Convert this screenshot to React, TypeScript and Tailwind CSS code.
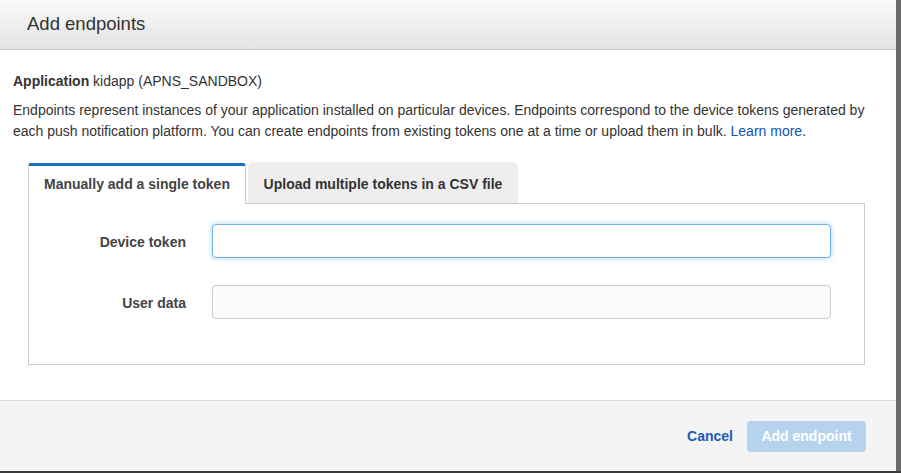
import React from "react";

export default function App() {
  return (
    <div className="w-[901px] h-[473px] bg-[#3a3a3a] overflow-hidden" style={{ fontFamily: '"Liberation Sans", Arial, Helvetica, sans-serif' }}>
      <div className="flex h-[471px]">
        <div className="w-[896px] h-[471px] bg-white flex flex-col">
          {/* Header */}
          <div className="h-[50px] shrink-0 bg-gradient-to-b from-[#fafafa] to-[#e3e3e3] border-b border-[#cccccc] flex items-center pl-[27px]">
            <h1 className="text-[18.5px] text-[#333333] leading-none pb-[1px]">Add endpoints</h1>
          </div>
          {/* Body */}
          <div className="flex-1 px-[13px] pt-[21px]">
            <p className="text-[14px] leading-[20px] text-[#333333]">
              <span className="font-bold">Application</span> kidapp (APNS_SANDBOX)
            </p>
            <p className="mt-[9px] text-[14px] leading-[21px] text-[#333333] pr-[4px]">
              Endpoints represent instances of your application installed on particular devices. Endpoints correspond to the device tokens generated by each push notification platform. You can create endpoints from existing tokens one at a time or upload them in bulk.{" "}
              <span className="text-[#0f52ba]">Learn more</span>.
            </p>
            <div className="ml-[15px] mr-[18px] mt-[20px]">
              <div className="flex items-end h-[41px]">
                <div className="w-[218px] h-[41px] bg-white border-t-[3px] border-t-[#1a6bc6] border-x border-x-[#cccccc] rounded-t-[3px] flex items-center justify-center text-[14px] font-bold text-[#444444] relative -mb-px z-10 pb-[1px]">
                  Manually add a single token
                </div>
                <div className="ml-[2px] w-[270px] h-[41px] bg-[#eeeeee] rounded-t-[5px] flex items-center justify-center text-[14px] font-bold text-[#333333] pt-[3px]">
                  Upload multiple tokens in a CSV file
                </div>
              </div>
              <div className="h-[162px] border border-[#cccccc] pt-[20px] flex flex-col gap-[27px]">
                <div className="flex items-center">
                  <label className="w-[157px] text-right text-[14px] font-bold text-[#444444] pt-[3px]">Device token</label>
                  <div className="ml-[26px] w-[619px] h-[34px] rounded-[4px] border border-[#6fb4f0] bg-white shadow-[0_0_5px_rgba(102,175,233,0.6)]" />
                </div>
                <div className="flex items-center">
                  <label className="w-[157px] text-right text-[14px] font-bold text-[#444444] pt-[2px]">User data</label>
                  <div className="ml-[26px] w-[619px] h-[34px] rounded-[4px] border border-[#cccccc] bg-[#fafafa]" />
                </div>
              </div>
            </div>
          </div>
          {/* Footer */}
          <div className="h-[71px] shrink-0 bg-[#f4f4f4] border-t border-[#dddddd] flex items-center justify-end pr-[30px]">
            <span className="text-[14px] font-bold text-[#1a5bb8] mr-[14px]">Cancel</span>
            <div className="w-[119px] h-[31px] rounded-[4px] bg-[#b6d3ee] flex items-center justify-center text-[14px] font-bold text-white pt-[1px]">
              Add endpoint
            </div>
          </div>
        </div>
        <div className="flex-1 bg-[#6a6a6a]" />
      </div>
    </div>
  );
}
